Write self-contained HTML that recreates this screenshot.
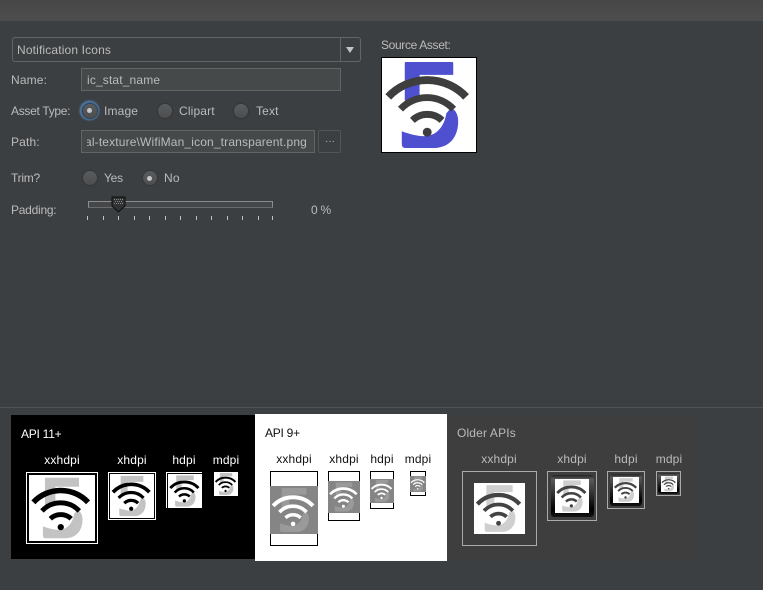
<!DOCTYPE html>
<html><head><meta charset="utf-8">
<style>
html,body{margin:0;padding:0}
body{width:763px;height:590px;background:#3c3f41;position:relative;overflow:hidden;font:12px "Liberation Sans",sans-serif;color:#bbb}
.a{position:absolute}
.t{position:absolute;white-space:nowrap;line-height:14px;letter-spacing:.15px}
.n{letter-spacing:-.25px}
.box{position:absolute;box-sizing:border-box}
.r{position:absolute;width:14px;height:14px;border-radius:50%;background:linear-gradient(#5a5d5f,#4b4d4f);box-shadow:0 0 1px 1px #333537}
.r.s:after{content:"";position:absolute;left:4.500px;top:4.500px;width:5px;height:5px;border-radius:50%;background:#c8c8c8}
.ic{position:absolute;display:block}
.k{--b:#000;--f:#c3c3c3;background:#fff}
.g{--b:#fff;--f:#9a9a9a;background:#858585}
.o{--b:#434343;--f:#cfcfcf;background:#fff}
.dk{position:absolute;box-sizing:border-box;border-radius:3px;background:linear-gradient(#222,#5a5a5a 10%,#363636 40%,#000 82%,#151515)}
.tick{position:absolute;top:216px;width:1px;height:4px;background:#c0c0c0}
</style></head>
<body>
<svg width="0" height="0" style="position:absolute">
<symbol id="w" viewBox="0 0 95 95">
<path d="M24 4H71Q72 4 72 5V17H38V43H23V5Q23 4 24 4Z" fill="var(--f)"/>
<path d="M70 50C75 53 77 58 77 64C77 80 68 91 52 91H24Q20 91 20 87V74C28 77 36 79 43 79C54 79 63 70 65 56Z" fill="var(--f)"/>
<g fill="none" stroke="var(--b)">
<path d="M6.300 39.300A54 54 0 0 1 85 39.300" stroke-width="8"/>
<path d="M18.700 51.700A36.500 36.500 0 0 1 72.300 51.700" stroke-width="7"/>
<path d="M30.700 63A21.700 21.700 0 0 1 60.700 63" stroke-width="7"/>
</g>
<circle cx="45.700" cy="75" r="4.500" fill="var(--b)"/>
</symbol>
</svg>

<div class="a" style="left:0;top:0;width:763px;height:21px;background:linear-gradient(#474747,#4d4d4d)"></div>

<!-- combo -->
<div class="box" style="left:12px;top:37px;width:349px;height:25px;border:1px solid #646464;border-radius:3px;background:#3c3f41"></div>
<div class="a" style="left:340px;top:38px;width:1px;height:23px;background:#646464"></div>
<div class="a" style="left:345.500px;top:47px;width:0;height:0;border-left:4.500px solid transparent;border-right:4.500px solid transparent;border-top:6px solid #c4c4c4"></div>
<div class="t" style="left:17px;top:43px">Notification Icons</div>

<div class="t" style="left:11px;top:73px">Name:</div>
<div class="box" style="left:81px;top:68px;width:260px;height:23px;border:1px solid #646464;background:#45494a"></div>
<div class="t" style="left:87px;top:73px">ic_stat_name</div>

<div class="t" style="left:11px;top:104px;letter-spacing:-.3px">Asset Type:</div>
<div class="a" style="left:80px;top:101px;width:19px;height:19px;border-radius:50%;background:#47729f;box-shadow:0 0 2px #5a8fc4"></div>
<div class="r s" style="left:82.500px;top:103.500px"></div>
<div class="t" style="left:104px;top:104px">Image</div>
<div class="r" style="left:157.500px;top:103.500px"></div>
<div class="t" style="left:179px;top:104px">Clipart</div>
<div class="r" style="left:234px;top:103.500px"></div>
<div class="t" style="left:256px;top:104px">Text</div>

<div class="t" style="left:11px;top:135px">Path:</div>
<div class="box" style="left:81px;top:130px;width:234px;height:23px;border:1px solid #646464;background:#45494a"></div>
<div class="a" style="left:87px;top:131px;width:222px;height:21px;overflow:hidden"><div class="t" style="right:2px;top:4px">ial-texture\WifiMan_icon_transparent.png</div></div>
<div class="box" style="left:318px;top:130px;width:23px;height:23px;border:1px solid #555;border-radius:2px;background:#3c3f41"></div>
<div class="t" style="left:325px;top:135px;font-size:10px;letter-spacing:0">···</div>

<div class="t n" style="left:11px;top:171px">Trim?</div>
<div class="r" style="left:82.500px;top:171px"></div>
<div class="t n" style="left:104px;top:171px">Yes</div>
<div class="r s" style="left:142.500px;top:171px"></div>
<div class="t" style="left:164px;top:171px">No</div>

<div class="t n" style="left:11px;top:203px">Padding:</div>
<div class="box" style="left:88px;top:201px;width:185px;height:7px;border:1px solid #8c8c8c;border-bottom-color:#6a6a6a;background:#45484a"></div>
<svg class="a" style="left:111px;top:196px" width="15" height="17" viewBox="0 0 15 17">
<path d="M1 1H14V10L7.500 16L1 10Z" fill="#303234" stroke="#0c0c0c"/>
<path d="M3 3h1v1H3zM5 3h1v1H5zM7 3h1v1H7zM9 3h1v1H9zM11 3h1v1h-1zM4 5h1v1H4zM6 5h1v1H6zM8 5h1v1H8zM10 5h1v1h-1zM3 7h1v1H3zM5 7h1v1H5zM7 7h1v1H7zM9 7h1v1H9zM11 7h1v1h-1z" fill="#8a8a8a"/>
</svg>
<div class="tick" style="left:87px"></div><div class="tick" style="left:103px"></div><div class="tick" style="left:118px"></div><div class="tick" style="left:134px"></div><div class="tick" style="left:149px"></div><div class="tick" style="left:165px"></div><div class="tick" style="left:180px"></div><div class="tick" style="left:196px"></div><div class="tick" style="left:211px"></div><div class="tick" style="left:227px"></div><div class="tick" style="left:242px"></div><div class="tick" style="left:258px"></div><div class="tick" style="left:272px"></div>
<div class="t n" style="left:311px;top:203px">0 %</div>

<div class="t" style="left:381px;top:38px;letter-spacing:-.35px">Source Asset:</div>
<div class="box" style="left:381px;top:57px;width:96px;height:96px;border:1px solid #000;background:#fff;--b:#3e3e3e;--f:#4f50cf">
<svg class="ic" style="left:0;top:0" width="94" height="94"><use href="#w"/></svg>
</div>

<div class="a" style="left:0;top:407px;width:763px;height:1px;background:#505355"></div>

<!-- API 11+ -->
<div class="a" style="left:11px;top:415px;width:244px;height:144px;background:#000"></div>
<div class="t n" style="left:21px;top:427px;color:#fff">API 11+</div>
<div class="t" style="left:32px;width:60px;text-align:center;top:453px;color:#fff">xxhdpi</div>
<div class="t" style="left:102px;width:60px;text-align:center;top:453px;color:#fff">xhdpi</div>
<div class="t" style="left:154px;width:60px;text-align:center;top:453px;color:#fff">hdpi</div>
<div class="t" style="left:196px;width:60px;text-align:center;top:453px;color:#fff">mdpi</div>

<div class="box" style="left:26px;top:472px;width:72px;height:72px;border:1px solid #fff"></div>
<div class="k a" style="left:29px;top:475px;width:66px;height:66px"><svg class="ic" width="66" height="66"><use href="#w"/></svg></div>
<div class="box" style="left:108px;top:472px;width:48px;height:48px;border:1px solid #fff"></div>
<div class="k a" style="left:110px;top:474px;width:44px;height:44px"><svg class="ic" width="44" height="44"><use href="#w"/></svg></div>
<div class="box" style="left:166px;top:472px;width:36px;height:36px;border:1px solid #fff;border-right:0;border-bottom:0"></div>
<div class="k a" style="left:168px;top:474px;width:34px;height:34px"><svg class="ic" width="34" height="34"><use href="#w"/></svg></div>
<div class="k a" style="left:214px;top:472px;width:24px;height:24px"><svg class="ic" width="24" height="24"><use href="#w"/></svg></div>

<!-- API 9+ -->
<div class="a" style="left:255px;top:414px;width:192px;height:147px;background:#fff"></div>
<div class="t n" style="left:265px;top:426px;color:#111">API 9+</div>
<div class="t" style="left:264px;width:60px;text-align:center;top:452px;color:#111">xxhdpi</div>
<div class="t" style="left:314px;width:60px;text-align:center;top:452px;color:#111">xhdpi</div>
<div class="t" style="left:352px;width:60px;text-align:center;top:452px;color:#111">hdpi</div>
<div class="t" style="left:388px;width:60px;text-align:center;top:452px;color:#111">mdpi</div>

<div class="box" style="left:270px;top:471px;width:48px;height:75px;border:1px solid #000"></div>
<div class="g a" style="left:270px;top:486px;width:48px;height:48px"><svg class="ic" width="48" height="48"><use href="#w"/></svg></div>
<div class="box" style="left:328px;top:471px;width:32px;height:50px;border:1px solid #000"></div>
<div class="g a" style="left:328px;top:481px;width:32px;height:32px"><svg class="ic" width="32" height="32"><use href="#w"/></svg></div>
<div class="box" style="left:370px;top:471px;width:24px;height:38px;border:1px solid #000"></div>
<div class="g a" style="left:370px;top:479px;width:24px;height:24px"><svg class="ic" width="24" height="24"><use href="#w"/></svg></div>
<div class="box" style="left:410px;top:471px;width:16px;height:25px;border:1px solid #000"></div>
<div class="g a" style="left:410px;top:476px;width:16px;height:16px"><svg class="ic" width="16" height="16"><use href="#w"/></svg></div>

<!-- Older -->
<div class="a" style="left:447px;top:415px;width:251px;height:145px;background:#3f3e3e"></div>
<div class="t" style="left:457px;top:426px">Older APIs</div>
<div class="t" style="left:469px;width:60px;text-align:center;top:452px">xxhdpi</div>
<div class="t" style="left:542px;width:60px;text-align:center;top:452px">xhdpi</div>
<div class="t" style="left:596px;width:60px;text-align:center;top:452px">hdpi</div>
<div class="t" style="left:639px;width:60px;text-align:center;top:452px">mdpi</div>

<div class="box" style="left:462px;top:471px;width:75px;height:75px;border:1px solid #aaa"></div>
<div class="o a" style="left:474px;top:483px;width:51px;height:51px"><svg class="ic" width="51" height="51"><use href="#w"/></svg></div>

<div class="box" style="left:547px;top:471px;width:50px;height:50px;border:1px solid #aaa"></div>
<div class="dk" style="left:551px;top:475px;width:43px;height:42px"></div>
<div class="o a" style="left:555px;top:479px;width:34px;height:34px"><svg class="ic" width="34" height="34"><use href="#w"/></svg></div>

<div class="box" style="left:607px;top:471px;width:38px;height:38px;border:1px solid #aaa"></div>
<div class="dk" style="left:610px;top:474px;width:32px;height:32px"></div>
<div class="o a" style="left:613px;top:477px;width:26px;height:26px"><svg class="ic" width="26" height="26"><use href="#w"/></svg></div>

<div class="box" style="left:656px;top:471px;width:25px;height:25px;border:1px solid #aaa"></div>
<div class="dk" style="left:658px;top:473px;width:21px;height:21px"></div>
<div class="o a" style="left:661px;top:476px;width:16px;height:16px"><svg class="ic" width="16" height="16"><use href="#w"/></svg></div>
</body></html>
